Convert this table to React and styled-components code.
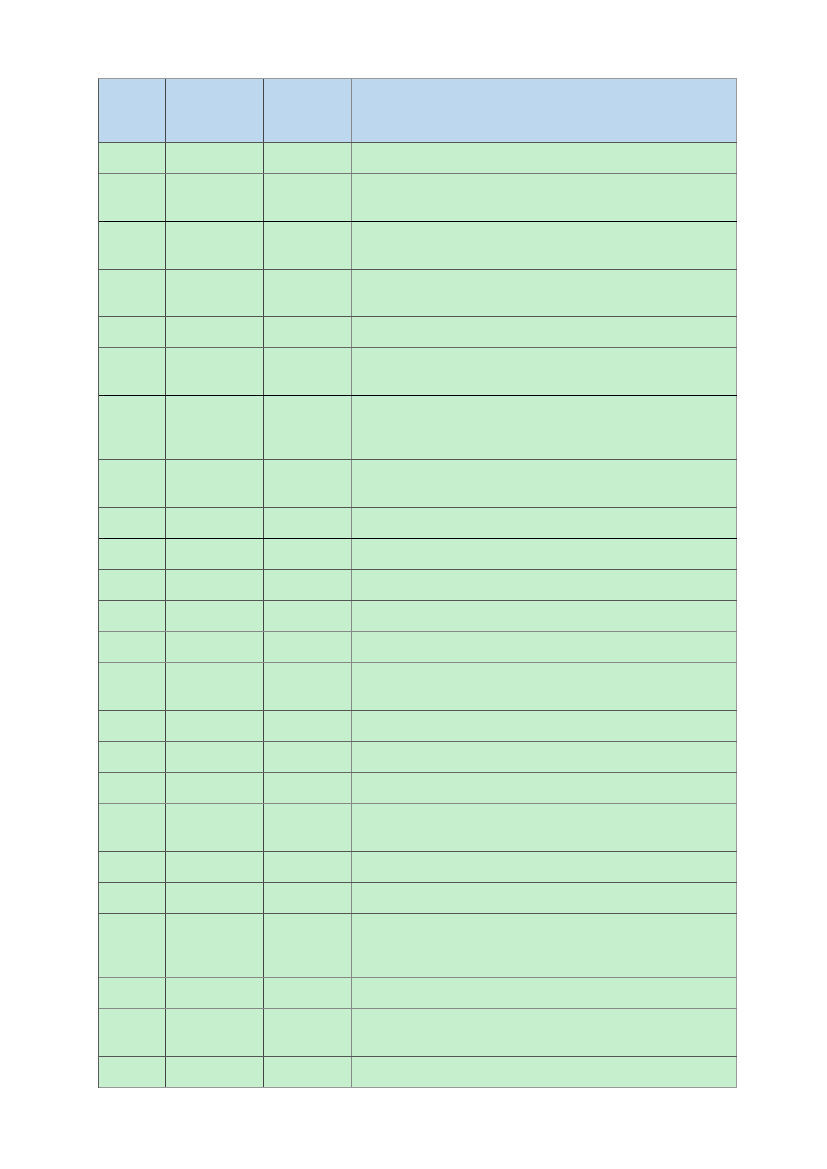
import React from "react";
import styled, { createGlobalStyle } from "styled-components";

const GlobalStyle = createGlobalStyle`
  html, body {
    margin: 0;
    padding: 0;
    background: #fff;
    font-family: "Liberation Sans", Arial, sans-serif;
  }
`;

const columns = "67px 98px 88px 385px";

// height of each body row (bottom border included) and its bottom line colour
const rows = [
  { h: 31, line: "#777" },
  { h: 48, line: "#000" },
  { h: 48, line: "#555" },
  { h: 47, line: "#555" },
  { h: 31, line: "#666" },
  { h: 48, line: "#000" },
  { h: 64, line: "#555" },
  { h: 48, line: "#555" },
  { h: 31, line: "#000" },
  { h: 31, line: "#555" },
  { h: 31, line: "#555" },
  { h: 31, line: "#888" },
  { h: 31, line: "#888" },
  { h: 48, line: "#555" },
  { h: 31, line: "#666" },
  { h: 31, line: "#666" },
  { h: 31, line: "#888" },
  { h: 48, line: "#555" },
  { h: 31, line: "#555" },
  { h: 31, line: "#555" },
  { h: 64, line: "#888" },
  { h: 31, line: "#888" },
  { h: 48, line: "#555" },
  { h: 31, line: "#999" },
];

const Page = styled.div`
  padding: 78px 0 0 98px;
`;

const Table = styled.div`
  width: 638px;
  border-left: 1px solid #5a5a5a;
  border-top: 1px solid #999;
`;

const Row = styled.div`
  display: grid;
  grid-template-columns: ${columns};
  height: ${(p) => p.$h}px;
  background: ${(p) => (p.$head ? "#bdd7ee" : "#c6efce")};
  border-bottom: 1px solid ${(p) => p.$line};
  box-sizing: border-box;
`;

const Cell = styled.div`
  border-right: 1px solid ${(p) => p.$line};
  font-size: 13px;
  color: #000;
`;

const colLines = ["#444", "#444", "#888", "#999"];

const App = () => (
  <>
    <GlobalStyle />
    <Page>
      <Table>
        <Row $head $h={64} $line="#555">
          {colLines.map((c, i) => (
            <Cell key={i} $line={c} />
          ))}
        </Row>
        {rows.map((r, i) => (
          <Row key={i} $h={r.h} $line={r.line}>
            {colLines.map((c, j) => (
              <Cell key={j} $line={c} />
            ))}
          </Row>
        ))}
      </Table>
    </Page>
  </>
);

export default App;
